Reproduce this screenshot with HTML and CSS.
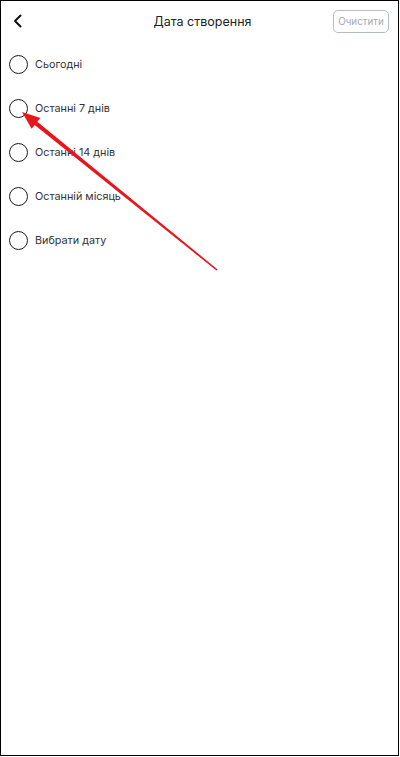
FILE: index.html
```html
<!DOCTYPE html>
<html lang="uk">
<head>
<meta charset="utf-8">
<link rel="stylesheet" href="styles.css">
</head>
<body>
<div class="frame">
  <header class="topbar">
    <button class="back" aria-label="Назад">
      <svg width="12" height="14" viewBox="0 0 12 14"><path d="M8.5 1.5 L3 7 L8.5 12.5" fill="none" stroke="#111" stroke-width="2" stroke-linecap="round" stroke-linejoin="round"/></svg>
    </button>
    <h1 class="title">Дата створення</h1>
    <button class="clear">Очистити</button>
  </header>
  <ul class="options">
    <li class="option"><span class="radio"></span><span class="label">Сьогодні</span></li>
    <li class="option"><span class="radio"></span><span class="label">Останні 7 днів</span></li>
    <li class="option"><span class="radio"></span><span class="label">Останні 14 днів</span></li>
    <li class="option"><span class="radio"></span><span class="label">Останній місяць</span></li>
    <li class="option"><span class="radio"></span><span class="label">Вибрати дату</span></li>
  </ul>
  <svg class="annotation" width="400" height="757" viewBox="0 0 400 757">
    <polygon points="22,112 40.4,117.9 37.3,121.7 217.5,269.4 216.5,270.6 34.7,124.9 31.6,128.7" fill="#e8161b"/>
  </svg>
</div>
</body>
</html>
```
FILE: styles.css
```css
* { box-sizing: border-box; }
html, body { margin: 0; padding: 0; background: #fff; }
body { font-family: Inter, "Noto Sans", sans-serif; color: #2b2b2b; }
.frame {
  position: relative;
  width: 399px;
  height: 756px;
  border: 1px solid #000;
  overflow: hidden;
}
.topbar {
  display: flex;
  align-items: center;
  height: 40px;
  padding: 0 9px 0 11px;
}
.back {
  border: 0;
  background: none;
  padding: 0;
  width: 14px;
  height: 14px;
  display: flex;
  align-items: center;
}
.title {
  flex: 1;
  margin: 0;
  text-align: center;
  font-size: 12.5px;
  font-weight: 400;
  color: #222;
  padding-left: 46px;
}
.clear {
  font-family: Inter, "Noto Sans", sans-serif;
  font-size: 9.8px;
  color: #a5a9b3;
  background: #fff;
  border: 1px solid #b6bccb;
  border-radius: 5px;
  height: 23px;
  width: 56px;
  padding: 0;
  margin-top: 1px;
}
.options {
  list-style: none;
  margin: 0;
  padding: 1px 0 0 8px;
}
.option {
  display: flex;
  align-items: center;
  gap: 7px;
  height: 44px;
}
.radio {
  width: 19px;
  height: 19px;
  border: 1.3px solid #1c1c1c;
  border-radius: 50%;
  flex: none;
}
.label {
  font-size: 10.8px;
  color: #333;
}
.annotation {
  position: absolute;
  left: -1px;
  top: -1px;
  pointer-events: none;
}
```
